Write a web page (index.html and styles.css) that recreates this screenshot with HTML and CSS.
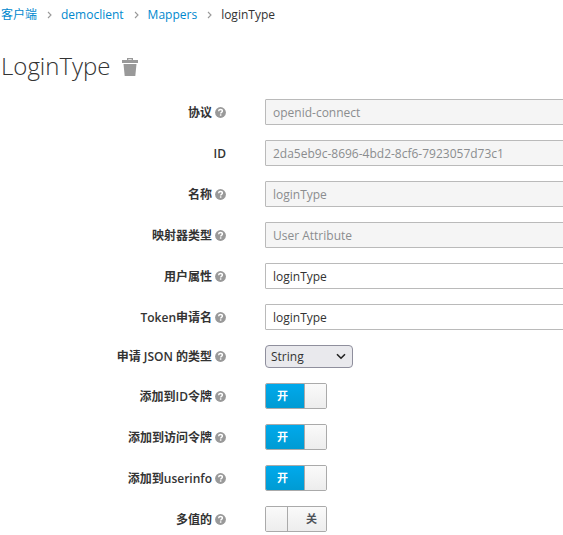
FILE: index.html
```html
<!DOCTYPE html>
<html lang="zh-CN">
<head>
<meta charset="utf-8">
<title>LoginType</title>
<link rel="stylesheet" href="styles.css">
</head>
<body>
<svg class="defs" width="0" height="0" aria-hidden="true">
  <symbol id="help" viewBox="0 0 11 11">
    <circle cx="5.5" cy="5.5" r="5.4" fill="#999"/>
    <path d="M3.6 4.3C3.7 3 4.5 2.5 5.5 2.5c1.1 0 1.9.6 1.9 1.6 0 1.3-1.7 1.3-1.7 2.5" fill="none" stroke="#fff" stroke-width="1.4"/>
    <rect x="4.9" y="7.3" width="1.5" height="1.4" fill="#fff"/>
  </symbol>
  <symbol id="angle" viewBox="0 0 5 8">
    <path d="M1 1l3 3-3 3" fill="none" stroke="#999" stroke-width="1.1"/>
  </symbol>
</svg>
<nav class="breadcrumb">
  <a class="cjk-link" href="#">客户端</a><svg class="sep"><use href="#angle"/></svg>
  <a href="#">democlient</a><svg class="sep"><use href="#angle"/></svg>
  <a href="#">Mappers</a><svg class="sep"><use href="#angle"/></svg>
  <span>loginType</span>
</nav>
<h1 class="title"><span>LoginType</span>
  <svg class="trash" viewBox="0 0 16 18"><path d="M5 2V0h6v2h5v3H0V2zM6.3 1.2V2h3.4v-.8zM1.5 6h13l-1.2 12H2.7z" fill="#999" fill-rule="evenodd"/></svg>
</h1>
<form class="form">
  <div class="row"><label>协议</label><svg class="help"><use href="#help"/></svg><input value="openid-connect" disabled></div>
  <div class="row"><label>ID</label><input value="2da5eb9c-8696-4bd2-8cf6-7923057d73c1" disabled></div>
  <div class="row"><label>名称</label><svg class="help"><use href="#help"/></svg><input value="loginType" disabled></div>
  <div class="row"><label>映射器类型</label><svg class="help"><use href="#help"/></svg><input value="User Attribute" disabled></div>
  <div class="row"><label>用户属性</label><svg class="help"><use href="#help"/></svg><input value="loginType"></div>
  <div class="row"><label>Token申请名</label><svg class="help"><use href="#help"/></svg><input value="loginType"></div>
  <div class="row row-select"><label>申请 JSON 的类型</label><svg class="help"><use href="#help"/></svg>
    <div class="select"><span>String</span><svg width="10" height="7" viewBox="0 0 10 7"><path d="M1 1.2l4 4 4-4" fill="none" stroke="#222" stroke-width="1.6"/></svg></div></div>
  <div class="row"><label>添加到ID令牌</label><svg class="help"><use href="#help"/></svg><div class="switch on"><span class="state">开</span><span class="knob"></span></div></div>
  <div class="row"><label>添加到访问令牌</label><svg class="help"><use href="#help"/></svg><div class="switch on"><span class="state">开</span><span class="knob"></span></div></div>
  <div class="row"><label>添加到userinfo</label><svg class="help"><use href="#help"/></svg><div class="switch on"><span class="state">开</span><span class="knob"></span></div></div>
  <div class="row"><label>多值的</label><svg class="help"><use href="#help"/></svg><div class="switch off"><span class="knob"></span><span class="state">关</span></div></div>
</form>
</body>
</html>
```
FILE: styles.css
```css
* { box-sizing: border-box; }
body {
  margin: 0;
  height: 535px;
  overflow: hidden;
  background: #fff;
  color: #333;
  font: 12px/17px "Open Sans", "Noto Sans CJK SC", sans-serif;
}
.defs { display: block; height: 0; }
.breadcrumb {
  display: flex;
  align-items: center;
  height: 17px;
  margin: 6px 0 0 1px;
}
.breadcrumb a { color: #0088ce; text-decoration: none; }
.breadcrumb .sep { width: 5px; height: 8px; margin: 0 9px 0 10px; }
.title {
  display: flex;
  align-items: center;
  height: 36px;
  margin: 25px 0 0 1px;
  font-size: 24px;
  font-weight: 300;
  line-height: 36px;
}
.trash { width: 16px; height: 18px; margin: 2px 0 0 11px; }
.form { margin-top: 15px; }
.row {
  display: grid;
  grid-template-columns: 212px 14px 1fr;
  align-items: center;
  height: 26px;
  margin-bottom: 15px;
}
.row-select { height: 23px; }
.row label { text-align: right; font-weight: 600; white-space: nowrap; }
.row label:has(+ input) { grid-column: 1 / 3; }
.help { width: 11px; height: 11px; margin-left: 3px; }
.row input {
  width: 310px;
  height: 26px;
  margin: 0 0 0 39px;
  padding: 0 7px;
  border: 1px solid #bababa;
  border-radius: 1px;
  background: #fff;
  color: #333;
  font: inherit;
}
.row input:disabled { background: #f5f5f5; color: #8b8d8f; }
.select {
  display: flex;
  align-items: center;
  justify-content: space-between;
  width: 88px;
  height: 23px;
  margin-left: 39px;
  padding: 0 6px 0 5px;
  border: 1px solid #8f8f9d;
  border-radius: 4px;
  background: #e9e9ed;
}
.switch {
  display: flex;
  width: 62px;
  height: 26px;
  margin-left: 39px;
  border: 1px solid #aaa;
  border-radius: 2px;
  overflow: hidden;
  font-size: 11px;
  font-weight: 700;
  line-height: 24px;
}
.state { flex: 1; }
.knob { width: 22px; background: linear-gradient(#fafafa, #ededed); }
.on .state { padding-left: 11px; color: #fff; background: linear-gradient(#00a9ec, #009bd3); }
.on .knob { border-left: 1px solid #aaa; }
.off .state { padding-left: 18px; color: #4d5258; background: linear-gradient(#fafafa, #ededed); }
.off .knob { border-right: 1px solid #aaa; }
```
